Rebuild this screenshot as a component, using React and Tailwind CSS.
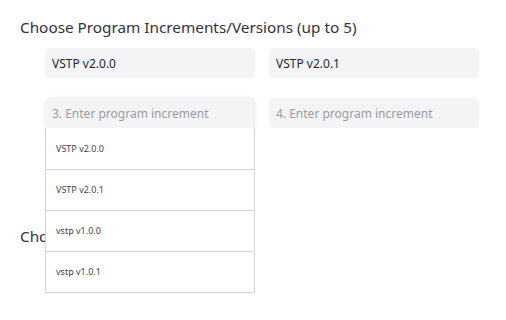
import React, { useState } from "react";

const options = ["VSTP v2.0.0", "VSTP v2.0.1", "vstp v1.0.0", "vstp v1.0.1"];

function Field({ value, placeholder, focused, children }) {
	return (
		<div className="relative">
			<input
				type="text"
				defaultValue={value}
				placeholder={placeholder}
				autoFocus={focused}
				className={`w-full h-[30px] rounded-[5px] bg-[#f3f4f6] px-[7px] text-[12px] text-[#262730] placeholder:text-[#9a9ca3] outline-none caret-[#262730] ${focused ? "rounded-b-none shadow-[0_0_4px_rgba(0,0,0,0.08)]" : ""}`}
			/>
			{children}
		</div>
	);
}

export default function App() {
	const [selected] = useState(["VSTP v2.0.0", "VSTP v2.0.1"]);

	return (
		<div className="w-[506px] h-[320px] bg-white pl-[20px] pt-[15px] font-['Noto_Sans',sans-serif] text-[#31333f] overflow-hidden">
			<h2 className="text-[15.3px] leading-[24px]">Choose Program Increments/Versions (up to 5)</h2>

			<div className="ml-[25px] mt-[9px] grid grid-cols-[210px_210px] gap-x-[14px] gap-y-[20px]">
				<Field value={selected[0]} />
				<Field value={selected[1]} />
				<Field placeholder="3. Enter program increment" focused>
					{/* open suggestion list */}
					<ul className="absolute left-0 top-[30px] z-10 w-[210px] bg-white border border-t-0 border-[#d4d4d4]">
						{options.map((opt, i) => (
							<li
								key={opt}
								className={`h-[41px] flex items-center pl-[10px] text-[9px] text-[#444] ${i > 0 ? "border-t border-[#d4d4d4]" : ""}`}
							>
								{opt}
							</li>
						))}
					</ul>
				</Field>
				<Field placeholder="4. Enter program increment" />
			</div>

			<h2 className="mt-[96px] text-[15.3px] leading-[24px]">Choose Features</h2>
		</div>
	);
}
